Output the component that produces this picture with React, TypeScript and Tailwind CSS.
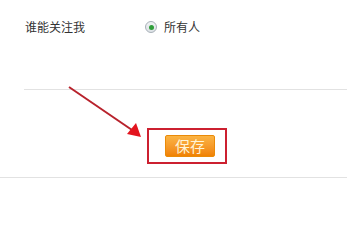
import React from "react";

export default function App() {
  return (
    <div
      className="relative w-[347px] h-[234px] bg-white overflow-hidden text-[#333]"
      style={{ fontFamily: '"Noto Sans CJK SC", "Noto Sans", sans-serif' }}
    >
      <div className="pt-[17px]">
        <div className="flex items-center h-[20px] text-[12px]">
          <div className="w-[145px] pl-[25px]">谁能关注我</div>
          <div className="flex items-center gap-[7px]">
            <span className="w-[12px] h-[12px] rounded-full border border-[#a8b0b8] bg-gradient-to-b from-[#f0f2f4] to-[#dde2e6] flex items-center justify-center">
              <span className="w-[5px] h-[5px] rounded-full bg-[#2f9e3a]" />
            </span>
            <span>所有人</span>
          </div>
        </div>
      </div>
      <div className="mt-[52px] ml-[24px] border-t border-[#e2e2e2]" />
      <div className="mt-[45px] pl-[165px]">
        <button className="w-[50px] h-[22px] rounded-[2px] border border-[#ea8a08] bg-gradient-to-b from-[#fbb443] to-[#f08200] text-[15px] leading-[20px] text-[#fff4d6] flex items-center justify-center">
          保存
        </button>
      </div>
      <div className="mt-[20px] border-t border-[#e2e2e2]" />

      <div className="absolute left-[147px] top-[128px] w-[80px] h-[36px] border-2 border-[#cc2030]" />
      <svg className="absolute left-0 top-0" width="347" height="234" viewBox="0 0 347 234">
        <line x1="69" y1="87" x2="132" y2="130" stroke="#b8222c" strokeWidth="2" />
        <polygon points="141,137 127,134 136,123" fill="#e3141e" />
      </svg>
    </div>
  );
}
